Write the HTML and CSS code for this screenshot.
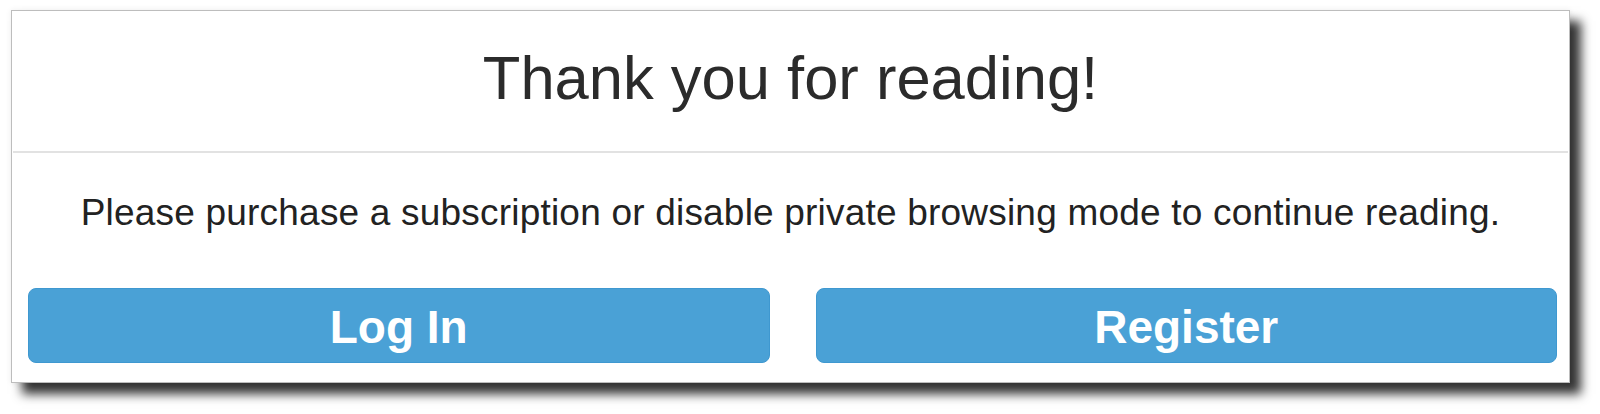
FILE: index.html
```html
<!DOCTYPE html>
<html lang="en">

<head>
    <meta charset="utf-8">
    <meta name="viewport" content="width=device-width, initial-scale=1.0">
    <title>Thank you for reading!</title>
    <link rel="stylesheet" href="styles.css">
</head>

<body>
    <section class="paywall">
        <header class="paywall-head">
            <h1>Thank you for reading!</h1>
        </header>
        <p class="paywall-text">Please purchase a subscription or disable private browsing mode to continue reading.</p>
        <div class="paywall-buttons">
            <button class="paywall-btn">Log In</button>
            <button class="paywall-btn">Register</button>
        </div>
    </section>
</body>

</html>
```

FILE: styles.css
```css
html,
body {
    height: 100%;
}

body {
    margin: 0;
    background-color: white;
    font-family: "Liberation Sans", Arial, sans-serif;
}

.paywall {
    width: 1557px;
    margin: 10px 0 0 11px;
    background-color: white;
    border: 1px solid #bdbdbd;
    box-shadow: 11px 11px 10px rgba(0, 0, 0, .8), 0 0 6px rgba(0, 0, 0, .07);
}

.paywall-head {
    margin: 0 1px;
    padding: 34px 0 40px;
    border-bottom: 2px solid #e2e2e2;
    text-align: center;
}

h1 {
    margin: 0;
    font-size: 61.5px;
    font-weight: normal;
    line-height: 66px;
    color: #2b2b2b;
}

.paywall-text {
    margin: 0;
    padding-top: 40px;
    text-align: center;
    font-size: 37px;
    letter-spacing: .2px;
    line-height: 40px;
    color: #222;
}

.paywall-buttons {
    display: flex;
    gap: 46px;
    padding: 55px 12px 19px 16px;
}

.paywall-btn {
    flex: 1;
    height: 75px;
    padding: 3px 0 0;
    background-color: #4aa1d6;
    border: 1px solid #3f98d0;
    border-radius: 8px;
    color: white;
    font-family: "Liberation Sans", Arial, sans-serif;
    font-size: 46px;
    font-weight: bold;
    line-height: 70px;
    cursor: pointer;
}
```
